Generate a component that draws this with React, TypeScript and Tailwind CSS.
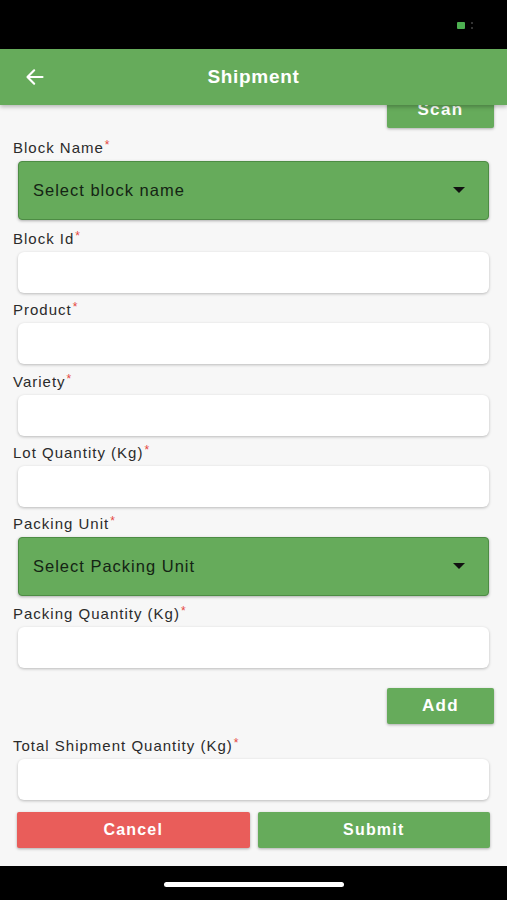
import React from "react";

function Label({ text }: { text: string }) {
  return (
    <div className="h-[26px] flex items-center pl-[13px] text-[15px] tracking-[1px] text-[#2b2b2b]">
      {text}
      <span className="text-[#e5483f] text-[12px] ml-[1px] -mt-[6px]">*</span>
    </div>
  );
}

function Input() {
  return (
    <div className="mx-[18px] h-[41px] bg-white rounded-[6px] shadow-[0_1px_3px_rgba(0,0,0,0.25)]" />
  );
}

function Select({ placeholder }: { placeholder: string }) {
  return (
    <div className="mx-[18px] h-[59px] bg-[#66ab5b] border border-[#4d8c44] rounded-[4px] shadow-[0_1px_3px_rgba(0,0,0,0.3)] flex items-center justify-between pl-[14px] pr-[23px]">
      <span className="text-[16.5px] tracking-[1px] text-[#142414]">{placeholder}</span>
      <svg width="12" height="7" viewBox="0 0 12 7">
        <path d="M0 0h12L6 6z" fill="#111" />
      </svg>
    </div>
  );
}

function GreenButton({ text }: { text: string }) {
  return (
    <button className="w-[107px] h-[36px] bg-[#66ab5b] text-white text-[17px] font-bold tracking-[1.4px] rounded-[2px] shadow-[0_1px_3px_rgba(0,0,0,0.3)]">
      {text}
    </button>
  );
}

export default function App() {
  return (
    <div
      className="w-[507px] h-[900px] bg-[#f7f7f7] flex flex-col overflow-hidden"
      style={{ fontFamily: "'Liberation Sans', Arial, sans-serif" }}
    >
      {/* status bar */}
      <div className="h-[49px] bg-black flex items-center justify-end pr-[34px] pt-[2px] shrink-0">
        <div className="flex items-center gap-[6px]">
          <div className="w-[8px] h-[7px] bg-[#4caf50] rounded-[1px]" />
          <div className="w-[2px] h-[7px] flex flex-col justify-between">
            <div className="w-[2px] h-[2px] bg-[#333]" />
            <div className="w-[2px] h-[2px] bg-[#333]" />
          </div>
        </div>
      </div>

      {/* header */}
      <div className="relative z-10 h-[56px] bg-[#66ab5b] flex items-center shrink-0 shadow-[0_2px_4px_rgba(0,0,0,0.25)]">
        <svg className="absolute left-[25px]" width="20" height="20" viewBox="0 0 24 24" fill="none" stroke="white" strokeWidth="2.6" strokeLinecap="round" strokeLinejoin="round">
          <path d="M21 12H4M11 4l-8 8 8 8" />
        </svg>
        <div className="flex-1 text-center text-white font-bold text-[19px] tracking-[0.7px]">Shipment</div>
      </div>

      {/* body */}
      <div className="flex-1 flex flex-col">
        <div className="flex justify-end pr-[13px] -mt-[13px]">
          <GreenButton text="Scan" />
        </div>

        <div className="mt-[7px]">
          <Label text="Block Name" />
        </div>
        <Select placeholder="Select block name" />

        <div className="mt-[6px]">
          <Label text="Block Id" />
        </div>
        <Input />

        <div className="mt-[4px]">
          <Label text="Product" />
        </div>
        <Input />

        <div className="mt-[5px]">
          <Label text="Variety" />
        </div>
        <Input />

        <div className="mt-[4px]">
          <Label text="Lot Quantity (Kg)" />
        </div>
        <Input />

        <div className="mt-[4px]">
          <Label text="Packing Unit" />
        </div>
        <Select placeholder="Select Packing Unit" />

        <div className="mt-[5px]">
          <Label text="Packing Quantity (Kg)" />
        </div>
        <Input />

        <div className="flex justify-end pr-[13px] mt-[20px]">
          <GreenButton text="Add" />
        </div>

        <div className="mt-[9px]">
          <Label text="Total Shipment Quantity (Kg)" />
        </div>
        <Input />

        <div className="flex gap-[8px] px-[17px] mt-[12px]">
          <button className="flex-1 h-[36px] bg-[#e95d5a] text-white text-[16px] font-bold tracking-[1.2px] rounded-[2px] shadow-[0_1px_3px_rgba(0,0,0,0.3)]">
            Cancel
          </button>
          <button className="flex-1 h-[36px] bg-[#66ab5b] text-white text-[16px] font-bold tracking-[1.2px] rounded-[2px] shadow-[0_1px_3px_rgba(0,0,0,0.3)]">
            Submit
          </button>
        </div>
      </div>

      {/* bottom bar */}
      <div className="h-[34px] bg-black shrink-0 flex justify-center items-center pt-[2px]">
        <div className="w-[180px] h-[5px] bg-white rounded-full" />
      </div>
    </div>
  );
}
